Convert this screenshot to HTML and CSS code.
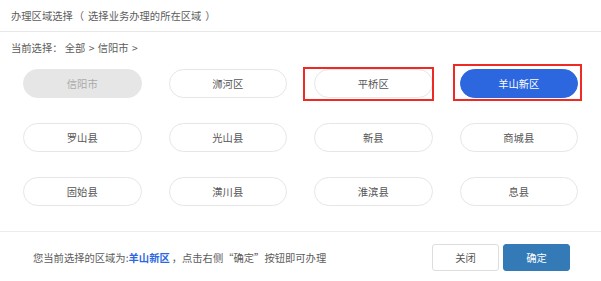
FILE: index.html
```html
<!DOCTYPE html>
<html lang="zh-CN">
<head>
	<meta charset="UTF-8">
	<title>办理区域选择</title>
	<link rel="stylesheet" href="styles.css">
</head>
<body>
<div class="dialog">
	<div class="dlg-head">办理区域选择<span class="po">（</span>选择业务办理的所在区域<span class="pc">）</span></div>

	<div class="dlg-body">
		<p class="crumb">当前选择： 全部 <i>&gt;</i> 信阳市 <i>&gt;</i></p>
		<ul class="area-list">
			<li><span class="area disabled">信阳市</span></li>
			<li><span class="area">浉河区</span></li>
			<li class="mark mark-a"><span class="area">平桥区</span></li>
			<li class="mark mark-b"><span class="area active">羊山新区</span></li>
			<li><span class="area">罗山县</span></li>
			<li><span class="area">光山县</span></li>
			<li><span class="area">新县</span></li>
			<li><span class="area">商城县</span></li>
			<li><span class="area">固始县</span></li>
			<li><span class="area">潢川县</span></li>
			<li><span class="area">淮滨县</span></li>
			<li><span class="area">息县</span></li>
		</ul>
	</div>

	<div class="dlg-foot">
		<p class="tip">您当前选择的区域为:<b>羊山新区</b>，点击右侧“确定”按钮即可办理</p>
		<div class="btns">
			<button class="btn btn-close">关闭</button>
			<button class="btn btn-ok">确定</button>
		</div>
	</div>
</div>
</body>
</html>
```

FILE: styles.css
```css
*{margin:0;padding:0;}
html,body{height:100%;background:#fff;}
body{
	font-family:"Noto Sans CJK SC","Liberation Sans",sans-serif;
	font-size:10.3px;
	color:#666;
}
ul{list-style:none;}
i{font-style:normal;}

.dlg-head{
	height:31px;
	line-height:31px;
	padding-left:11px;
	border-bottom:1px solid #e8e8e8;
	color:#5c5c5c;
}
.dlg-head .po{margin:0 4px 0 1px;}
.dlg-head .pc{margin:0 0 0 4px;}

.crumb{
	padding:10px 0 0 11px;
	line-height:12px;
	color:#5c5c5c;
}
.crumb i{padding:0 1px;}

.area-list{
	display:grid;
	grid-template-columns:repeat(4,1fr);
	column-gap:27px;
	row-gap:25px;
	padding:0 23px;
	margin-top:15px;
}
.area-list li{position:relative;}
.area{
	display:block;
	height:27px;
	line-height:27px;
	border:1px solid #e6e6e6;
	border-radius:15px;
	text-align:center;
	color:#555;
	background:#fff;
}
.area.disabled{
	background:#e6e6e6;
	border-color:#e6e6e6;
	color:#aaa;
}
.area.active{
	background:#2c67df;
	border-color:#2c67df;
	color:#fff;
}

/* 标注框 */
.mark::after{
	content:"";
	position:absolute;
	border:2px solid #ee2a24;
}
.mark-a::after{top:-2px;bottom:-3px;left:-11px;right:-1px;}
.mark-b::after{top:-5px;bottom:-3px;left:-7px;right:-4px;}

.dlg-foot{
	display:flex;
	align-items:center;
	justify-content:space-between;
	margin-top:25px;
	border-top:1px solid #ececec;
	padding:12px 31px 0 33px;
}
.tip{color:#5c5c5c;}
.tip b{color:#2c67df;margin-right:2px;}
.btns{display:flex;gap:4px;}
.btn{
	width:67px;
	height:27px;
	font-family:inherit;
	font-size:10.3px;
	border-radius:3px;
	cursor:pointer;
}
.btn-close{
	background:#fff;
	border:1px solid #ddd;
	color:#555;
}
.btn-ok{
	background:#337ab7;
	border:1px solid #337ab7;
	color:#fff;
}
```
